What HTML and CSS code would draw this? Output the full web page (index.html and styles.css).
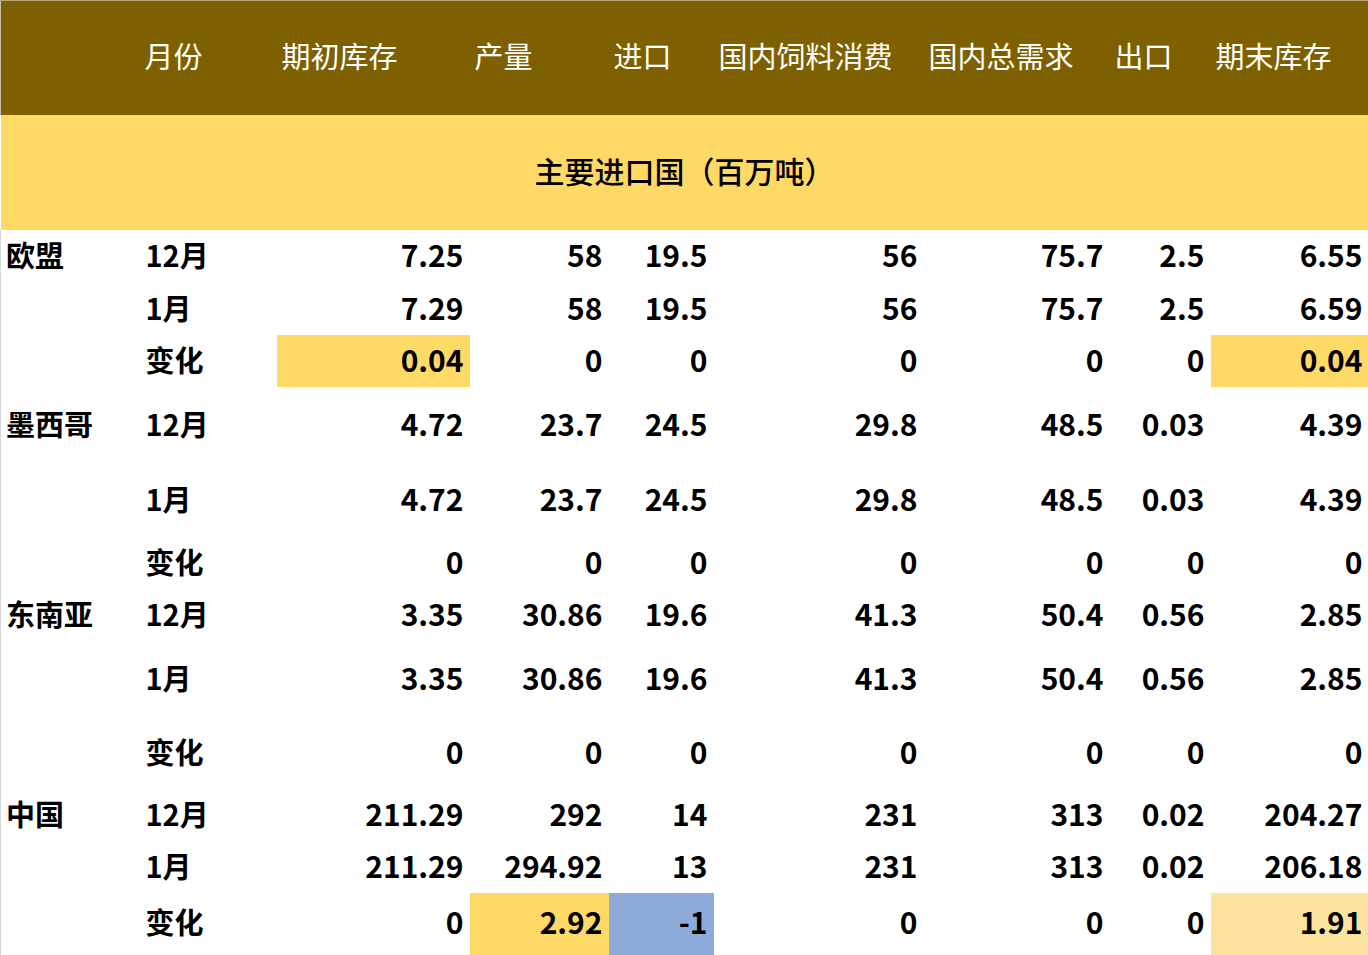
FILE: index.html
```html
<!DOCTYPE html>
<html lang="zh-CN">
<head>
<meta charset="utf-8">
<title>主要进口国</title>
<link rel="stylesheet" href="styles.css">
</head>
<body>
<table class="sheet">
  <colgroup>
    <col class="c0"><col class="c1"><col class="c2"><col class="c3"><col class="c4"><col class="c5"><col class="c6"><col class="c7"><col class="c8">
  </colgroup>
  <thead>
    <tr class="head">
      <th></th><th>月份</th><th>期初库存</th><th>产量</th><th>进口</th><th>国内饲料消费</th><th>国内总需求</th><th>出口</th><th>期末库存</th>
    </tr>
    <tr class="sub">
      <th colspan="9">主要进口国（百万吨）</th>
    </tr>
  </thead>
  <tbody>
    <tr class="r52"><td class="name">欧盟</td><td class="m">12月</td><td>7.25</td><td>58</td><td>19.5</td><td>56</td><td>75.7</td><td>2.5</td><td>6.55</td></tr>
    <tr class="r53"><td></td><td class="m">1月</td><td>7.29</td><td>58</td><td>19.5</td><td>56</td><td>75.7</td><td>2.5</td><td>6.59</td></tr>
    <tr class="r52"><td></td><td class="m">变化</td><td class="hy">0.04</td><td>0</td><td>0</td><td>0</td><td>0</td><td>0</td><td class="hy">0.04</td></tr>
    <tr class="r64"><td class="name">墨西哥</td><td class="m">12月</td><td>4.72</td><td>23.7</td><td>24.5</td><td>29.8</td><td>48.5</td><td>0.03</td><td>4.39</td></tr>
    <tr class="r75"><td></td><td class="m">1月</td><td>4.72</td><td>23.7</td><td>24.5</td><td>29.8</td><td>48.5</td><td>0.03</td><td>4.39</td></tr>
    <tr class="r63"><td></td><td class="m">变化</td><td>0</td><td>0</td><td>0</td><td>0</td><td>0</td><td>0</td><td>0</td></tr>
    <tr class="r52"><td class="name">东南亚</td><td class="m">12月</td><td>3.35</td><td>30.86</td><td>19.6</td><td>41.3</td><td>50.4</td><td>0.56</td><td>2.85</td></tr>
    <tr class="r64"><td></td><td class="m">1月</td><td>3.35</td><td>30.86</td><td>19.6</td><td>41.3</td><td>50.4</td><td>0.56</td><td>2.85</td></tr>
    <tr class="r74"><td></td><td class="m">变化</td><td>0</td><td>0</td><td>0</td><td>0</td><td>0</td><td>0</td><td>0</td></tr>
    <tr class="r62"><td class="name">中国</td><td class="m">12月</td><td>211.29</td><td>292</td><td>14</td><td>231</td><td>313</td><td>0.02</td><td>204.27</td></tr>
    <tr class="r52"><td></td><td class="m">1月</td><td>211.29</td><td>294.92</td><td>13</td><td>231</td><td>313</td><td>0.02</td><td>206.18</td></tr>
    <tr class="r62 last"><td></td><td class="m">变化</td><td>0</td><td class="hy">2.92</td><td class="hb">-1</td><td>0</td><td>0</td><td>0</td><td class="hl">1.91</td></tr>
  </tbody>
</table>
</body>
</html>
```

FILE: styles.css
```css
html, body {
  margin: 0;
  padding: 0;
  background: #ffffff;
}

body {
  width: 1368px;
  height: 955px;
  overflow: hidden;
  font-family: "Noto Sans CJK SC", "Noto Sans", sans-serif;
  color: #000000;
}

.sheet {
  width: 1368px;
  border-collapse: collapse;
  border-spacing: 0;
  table-layout: fixed;
}

.c0 { width: 139px; }
.c1 { width: 137px; }
.c2 { width: 193px; }
.c3 { width: 139px; }
.c4 { width: 105px; }
.c5 { width: 210px; }
.c6 { width: 186px; }
.c7 { width: 101px; }
.c8 { width: 158px; }

.sheet th,
.sheet td {
  overflow: hidden;
  white-space: nowrap;
}

.sheet .head th {
  height: 108px;
  border-top: 1px solid #b9a679;
  background: #7f6000;
  color: #ffffff;
  font-size: 29px;
  font-weight: 400;
  text-align: left;
  vertical-align: middle;
  padding: 0 0 6px 5px;
  line-height: 40px;
}

.sheet .head th:first-child {
  border-left: 1px solid #c9bfa6;
}

.sheet .sub th {
  height: 110px;
  background: #ffd966;
  font-size: 30px;
  font-weight: 500;
  text-align: center;
  vertical-align: middle;
  line-height: 40px;
  padding: 0 0 5px 0;
}

.sheet tbody td {
  font-size: 30px;
  font-weight: 700;
  line-height: 40px;
  vertical-align: bottom;
  text-align: right;
  padding: 0 6px 8px 0;
}

.sheet tbody td:first-child {
  border-left: 1px solid #d8d8d8;
}

.sheet tbody td.name {
  text-align: left;
  padding-left: 5px;
  font-size: 29px;
}

.sheet tbody td.m {
  text-align: left;
  padding-left: 6px;
  font-size: 29px;
}

.sheet .r52 td { height: 44px; }
.sheet .r53 td { height: 45px; }
.sheet .r62 td { height: 54px; }
.sheet .r63 td { height: 55px; }
.sheet .r64 td { height: 56px; }
.sheet .r74 td { height: 66px; }
.sheet .r75 td { height: 67px; }

.sheet .last td {
  height: 48px;
  padding-bottom: 14px;
}

.hy { background: #ffd966; }
.hb { background: #8eaadb; }
.hl { background: #fbe39d; }
```
